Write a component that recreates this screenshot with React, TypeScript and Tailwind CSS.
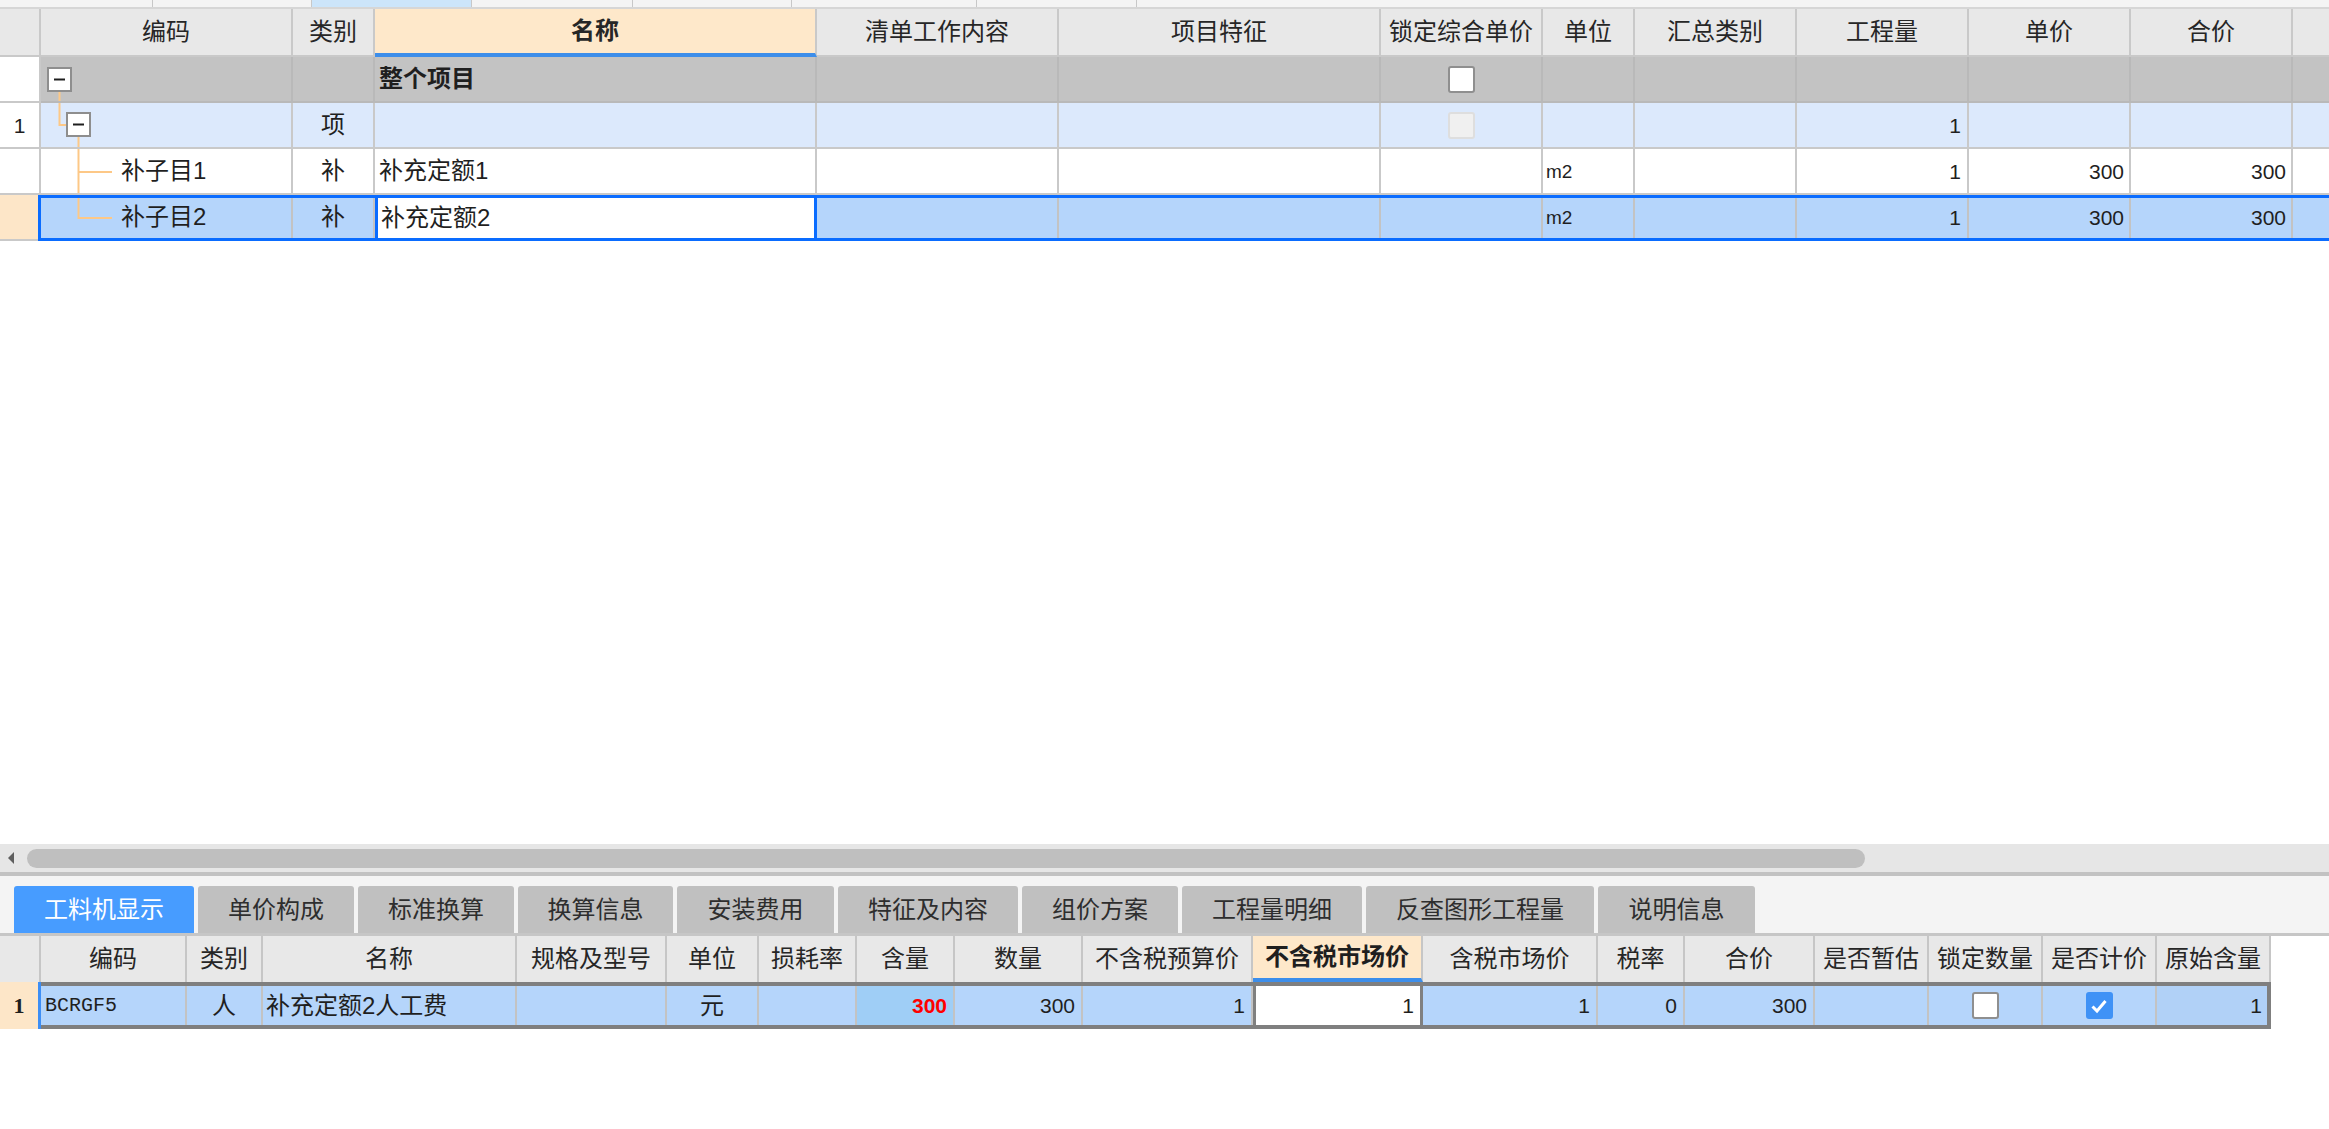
import React from "react";

const ORANGE = "#fdc887";

function TreeCell({ row }: { row: number }) {
  // 252 x 46 drawing of tree connectors / expanders
  return (
    <svg className="absolute inset-0" width="250" height="44" viewBox="0 0 250 44">
      {row === 0 && (
        <>
          <line x1="18.5" y1="34" x2="18.5" y2="46" stroke={ORANGE} strokeWidth="2" />
          <rect x="7" y="11" width="23" height="23" fill="#fff" stroke="#8e8e8e" strokeWidth="2" />
          <line x1="13" y1="22.5" x2="24" y2="22.5" stroke="#1e1e1e" strokeWidth="2" />
        </>
      )}
      {row === 1 && (
        <>
          <line x1="18.5" y1="0" x2="18.5" y2="23" stroke={ORANGE} strokeWidth="2" />
          <line x1="18.5" y1="22" x2="26" y2="22" stroke={ORANGE} strokeWidth="2" />
          <line x1="37.5" y1="33" x2="37.5" y2="46" stroke={ORANGE} strokeWidth="2" />
          <rect x="26" y="10" width="23" height="23" fill="#fff" stroke="#8e8e8e" strokeWidth="2" />
          <line x1="32" y1="21.5" x2="43" y2="21.5" stroke="#1e1e1e" strokeWidth="2" />
        </>
      )}
      {row === 2 && (
        <>
          <line x1="37.5" y1="0" x2="37.5" y2="46" stroke={ORANGE} strokeWidth="2" />
          <line x1="37.5" y1="23" x2="71" y2="23" stroke={ORANGE} strokeWidth="2" />
        </>
      )}
      {row === 3 && (
        <>
          <line x1="37.5" y1="0" x2="37.5" y2="24" stroke={ORANGE} strokeWidth="2" />
          <line x1="37.5" y1="23" x2="71" y2="23" stroke={ORANGE} strokeWidth="2" />
        </>
      )}
    </svg>
  );
}

function Check({ checked = false }: { checked?: boolean }) {
  if (checked) {
    return (
      <div className="w-[27px] h-[27px] rounded-[3px] bg-[#3f92f6] flex items-center justify-center">
        <svg width="18" height="16" viewBox="0 0 18 16">
          <path d="M2.5 8.5 L7 13 L15.5 3" fill="none" stroke="#fff" strokeWidth="3" />
        </svg>
      </div>
    );
  }
  return <div className="w-[27px] h-[27px] rounded-[3px] bg-white border-2 border-[#8f8f8f]" />;
}

const topHead: { w: string; t: string }[] = [
  { w: "w-[41px]", t: "" },
  { w: "w-[252px]", t: "编码" },
  { w: "w-[82px]", t: "类别" },
  { w: "w-[442px]", t: "名称" },
  { w: "w-[242px]", t: "清单工作内容" },
  { w: "w-[322px]", t: "项目特征" },
  { w: "w-[162px]", t: "锁定综合单价" },
  { w: "w-[92px]", t: "单位" },
  { w: "w-[162px]", t: "汇总类别" },
  { w: "w-[172px]", t: "工程量" },
  { w: "w-[162px]", t: "单价" },
  { w: "w-[162px]", t: "合价" },
];

const botHead: { w: string; t: string }[] = [
  { w: "w-[41px]", t: "" },
  { w: "w-[146px]", t: "编码" },
  { w: "w-[76px]", t: "类别" },
  { w: "w-[254px]", t: "名称" },
  { w: "w-[150px]", t: "规格及型号" },
  { w: "w-[92px]", t: "单位" },
  { w: "w-[98px]", t: "损耗率" },
  { w: "w-[98px]", t: "含量" },
  { w: "w-[128px]", t: "数量" },
  { w: "w-[170px]", t: "不含税预算价" },
  { w: "w-[170px]", t: "不含税市场价" },
  { w: "w-[175px]", t: "含税市场价" },
  { w: "w-[87px]", t: "税率" },
  { w: "w-[130px]", t: "合价" },
  { w: "w-[114px]", t: "是否暂估" },
  { w: "w-[114px]", t: "锁定数量" },
  { w: "w-[114px]", t: "是否计价" },
  { w: "w-[114px]", t: "原始含量" },
];

const tabs: { t: string; w: string }[] = [
  { t: "工料机显示", w: "w-[180px]" },
  { t: "单价构成", w: "w-[156px]" },
  { t: "标准换算", w: "w-[156px]" },
  { t: "换算信息", w: "w-[155px]" },
  { t: "安装费用", w: "w-[157px]" },
  { t: "特征及内容", w: "w-[180px]" },
  { t: "组价方案", w: "w-[156px]" },
  { t: "工程量明细", w: "w-[180px]" },
  { t: "反查图形工程量", w: "w-[228px]" },
  { t: "说明信息", w: "w-[157px]" },
];

const cellBase = "shrink-0 h-full flex items-center border-r-2 border-b-2";
const num = "text-[21px] font-['Liberation_Sans',sans-serif]";

export default function App() {
  return (
    <div className="w-[2329px] h-[1129px] overflow-hidden bg-white text-[#1f1f1f] text-[24px] leading-none font-['Liberation_Sans','Noto_Sans_CJK_SC',sans-serif]">
      {/* TOP GRID */}
      <div className="h-[844px] flex flex-col">
        {/* top strip */}
        <div className="flex h-[9px] shrink-0 border-b-2 border-[#d6d6d6] bg-[#f4f4f4]">
          <div className="w-[153px] border-r border-[#c8c8c8]" />
          <div className="w-[159px] border-r border-[#c8c8c8]" />
          <div className="w-[160px] border-r border-[#c8c8c8] bg-[#cce5fa]" />
          <div className="w-[161px] border-r border-[#c8c8c8]" />
          <div className="w-[159px] border-r border-[#c8c8c8]" />
          <div className="w-[185px] border-r border-[#c8c8c8]" />
          <div className="w-[160px] border-r border-[#c8c8c8]" />
          <div className="flex-1" />
        </div>

        {/* header */}
        <div className="flex h-[48px] shrink-0 bg-[#e8e8e8] text-[#262626]">
          {topHead.map((h, i) =>
            h.t === "名称" ? (
              <div
                key={i}
                className={`${h.w} shrink-0 h-full flex items-center justify-center border-r-2 border-b-[4px] border-[#c9c9c9] border-b-[#3d8eea] bg-[#fee8ca] font-bold`}
              >
                {h.t}
              </div>
            ) : (
              <div key={i} className={`${h.w} ${cellBase} justify-center border-[#c9c9c9]`}>
                {h.t}
              </div>
            )
          )}
          <div className="flex-1 h-full border-b-2 border-[#c9c9c9]" />
        </div>

        {/* row 0 : 整个项目 */}
        <div className="flex h-[46px] shrink-0">
          <div className={`w-[41px] ${cellBase} bg-white border-[#c9c9c9]`} />
          <div className={`w-[252px] ${cellBase} relative bg-[#c3c3c3] border-[#b9b9b9]`}>
            <TreeCell row={0} />
          </div>
          <div className={`w-[82px] ${cellBase} bg-[#c3c3c3] border-[#b9b9b9]`} />
          <div className={`w-[442px] ${cellBase} bg-[#c3c3c3] border-[#b9b9b9] pl-[4px] font-bold`}>整个项目</div>
          <div className={`w-[242px] ${cellBase} bg-[#c3c3c3] border-[#b9b9b9]`} />
          <div className={`w-[322px] ${cellBase} bg-[#c3c3c3] border-[#b9b9b9]`} />
          <div className={`w-[162px] ${cellBase} justify-center bg-[#c3c3c3] border-[#b9b9b9]`}>
            <Check />
          </div>
          <div className={`w-[92px] ${cellBase} bg-[#c3c3c3] border-[#b9b9b9]`} />
          <div className={`w-[162px] ${cellBase} bg-[#c3c3c3] border-[#b9b9b9]`} />
          <div className={`w-[172px] ${cellBase} bg-[#c3c3c3] border-[#b9b9b9]`} />
          <div className={`w-[162px] ${cellBase} bg-[#c3c3c3] border-[#b9b9b9]`} />
          <div className={`w-[162px] ${cellBase} bg-[#c3c3c3] border-[#b9b9b9]`} />
          <div className="flex-1 h-full border-b-2 bg-[#c3c3c3] border-[#b9b9b9]" />
        </div>

        {/* row 1 */}
        <div className="flex h-[46px] shrink-0">
          <div className={`w-[41px] ${cellBase} justify-center bg-white border-[#c9c9c9] ${num}`}>1</div>
          <div className={`w-[252px] ${cellBase} relative bg-[#dce9fc] border-[#c9c9c9]`}>
            <TreeCell row={1} />
          </div>
          <div className={`w-[82px] ${cellBase} justify-center bg-[#dce9fc] border-[#c9c9c9]`}>项</div>
          <div className={`w-[442px] ${cellBase} bg-[#dce9fc] border-[#c9c9c9]`} />
          <div className={`w-[242px] ${cellBase} bg-[#dce9fc] border-[#c9c9c9]`} />
          <div className={`w-[322px] ${cellBase} bg-[#dce9fc] border-[#c9c9c9]`} />
          <div className={`w-[162px] ${cellBase} justify-center bg-[#dce9fc] border-[#c9c9c9]`}>
            <div className="w-[27px] h-[27px] rounded-[3px] bg-[#f0f0f0] border-2 border-[#dedede]" />
          </div>
          <div className={`w-[92px] ${cellBase} bg-[#dce9fc] border-[#c9c9c9]`} />
          <div className={`w-[162px] ${cellBase} bg-[#dce9fc] border-[#c9c9c9]`} />
          <div className={`w-[172px] ${cellBase} justify-end pr-[6px] bg-[#dce9fc] border-[#c9c9c9] ${num}`}>1</div>
          <div className={`w-[162px] ${cellBase} bg-[#dce9fc] border-[#c9c9c9]`} />
          <div className={`w-[162px] ${cellBase} bg-[#dce9fc] border-[#c9c9c9]`} />
          <div className="flex-1 h-full border-b-2 bg-[#dce9fc] border-[#c9c9c9]" />
        </div>

        {/* row 2 : 补子目1 */}
        <div className="flex h-[46px] shrink-0">
          <div className={`w-[41px] ${cellBase} bg-white border-[#c9c9c9]`} />
          <div className={`w-[252px] ${cellBase} relative bg-white border-[#c9c9c9] pl-[80px]`}>
            <TreeCell row={2} />
            <span className="relative">补子目1</span>
          </div>
          <div className={`w-[82px] ${cellBase} justify-center bg-white border-[#c9c9c9]`}>补</div>
          <div className={`w-[442px] ${cellBase} bg-white border-[#c9c9c9] pl-[4px]`}>补充定额1</div>
          <div className={`w-[242px] ${cellBase} bg-white border-[#c9c9c9]`} />
          <div className={`w-[322px] ${cellBase} bg-white border-[#c9c9c9]`} />
          <div className={`w-[162px] ${cellBase} bg-white border-[#c9c9c9]`} />
          <div className={`w-[92px] ${cellBase} bg-white border-[#c9c9c9] pl-[3px] text-[19px] font-['Liberation_Sans',sans-serif]`}>m2</div>
          <div className={`w-[162px] ${cellBase} bg-white border-[#c9c9c9]`} />
          <div className={`w-[172px] ${cellBase} justify-end pr-[6px] bg-white border-[#c9c9c9] ${num}`}>1</div>
          <div className={`w-[162px] ${cellBase} justify-end pr-[5px] bg-white border-[#c9c9c9] ${num}`}>300</div>
          <div className={`w-[162px] ${cellBase} justify-end pr-[5px] bg-white border-[#c9c9c9] ${num}`}>300</div>
          <div className="flex-1 h-full border-b-2 bg-white border-[#c9c9c9]" />
        </div>

        {/* row 3 : 补子目2 (selected) */}
        <div className="relative flex h-[46px] shrink-0">
          <div className={`w-[41px] ${cellBase} bg-[#fde6c8] border-[#c9c9c9]`} />
          <div className={`w-[252px] ${cellBase} relative bg-[#b5d5fb] border-[#c3c3c3] pl-[80px]`}>
            <TreeCell row={3} />
            <span className="relative">补子目2</span>
          </div>
          <div className={`w-[82px] ${cellBase} justify-center bg-[#b5d5fb] border-[#c3c3c3]`}>补</div>
          <div className="w-[442px] shrink-0 h-full flex items-center bg-white border-x-[3px] border-[#0a6cff] pl-[3px]">补充定额2</div>
          <div className={`w-[242px] ${cellBase} bg-[#b5d5fb] border-[#c3c3c3]`} />
          <div className={`w-[322px] ${cellBase} bg-[#b5d5fb] border-[#c3c3c3]`} />
          <div className={`w-[162px] ${cellBase} bg-[#b5d5fb] border-[#c3c3c3]`} />
          <div className={`w-[92px] ${cellBase} bg-[#b5d5fb] border-[#c3c3c3] pl-[3px] text-[19px] font-['Liberation_Sans',sans-serif]`}>m2</div>
          <div className={`w-[162px] ${cellBase} bg-[#b5d5fb] border-[#c3c3c3]`} />
          <div className={`w-[172px] ${cellBase} justify-end pr-[6px] bg-[#b5d5fb] border-[#c3c3c3] ${num}`}>1</div>
          <div className={`w-[162px] ${cellBase} justify-end pr-[5px] bg-[#b5d5fb] border-[#c3c3c3] ${num}`}>300</div>
          <div className={`w-[162px] ${cellBase} justify-end pr-[5px] bg-[#b5d5fb] border-[#c3c3c3] ${num}`}>300</div>
          <div className="flex-1 h-full border-b-2 bg-[#b5d5fb] border-[#c3c3c3]" />
          <div className="pointer-events-none absolute top-0 bottom-0 left-[38px] right-0 border-y-[3px] border-l-[3px] border-[#0a6cff]" />
        </div>

        <div className="flex-1 bg-white" />
      </div>

      {/* horizontal scrollbar */}
      <div className="h-[32px] bg-[#e6e6e6] border-b-4 border-[#c2c2c2] flex items-center">
        <svg className="ml-[7px] shrink-0" width="8" height="12" viewBox="0 0 8 12">
          <path d="M7 0 L1 6 L7 12 Z" fill="#5f5f5f" />
        </svg>
        <div className="ml-[12px] w-[1838px] h-[19px] rounded-full bg-[#bfbfbf]" />
      </div>

      {/* tabs */}
      <div className="h-[60px] bg-[#f4f4f4] border-b-[3px] border-[#c6c6c6] flex items-end gap-[4px] pl-[14px]">
        {tabs.map((t, i) => (
          <div
            key={i}
            className={
              i === 0
                ? `${t.w} h-[47px] shrink-0 rounded-t-[3px] bg-[#479cff] text-white flex items-center justify-center`
                : `${t.w} h-[47px] shrink-0 rounded-t-[3px] bg-[#c0c0c0] text-[#2e2e2e] flex items-center justify-center`
            }
          >
            {t.t}
          </div>
        ))}
      </div>

      {/* bottom header */}
      <div className="flex h-[46px]">
        {botHead.map((h, i) =>
          h.t === "不含税市场价" ? (
            <div
              key={i}
              className={`${h.w} shrink-0 h-full flex items-center justify-center border-r-2 border-b-[4px] border-[#c6c6c6] border-b-[#3d8eea] bg-[#fee8ca] font-bold`}
            >
              {h.t}
            </div>
          ) : (
            <div key={i} className={`${h.w} shrink-0 h-full flex items-center justify-center border-r-2 border-[#c6c6c6] bg-[#e8e8e8] text-[#262626]`}>
              {h.t}
            </div>
          )
        )}
      </div>

      {/* bottom data row */}
      <div className="flex h-[47px]">
        <div className="w-[38px] shrink-0 h-full bg-[#fde6c8] flex items-center justify-center font-bold text-[22px] font-['Liberation_Serif',serif]">1</div>
        <div className="w-[3px] shrink-0 h-full bg-[#3d8ef5]" />
        <div className="flex h-full border-y-4 border-r-4 border-[#7f7f7f] bg-[#b5d5fb]">
          <div className="w-[146px] shrink-0 h-full flex items-center border-r-2 border-[#c3c3c3] pl-[4px] text-[20px] font-['Liberation_Mono',monospace]">BCRGF5</div>
          <div className="w-[76px] shrink-0 h-full flex items-center justify-center border-r-2 border-[#c3c3c3]">人</div>
          <div className="w-[254px] shrink-0 h-full flex items-center border-r-2 border-[#c3c3c3] pl-[3px]">补充定额2人工费</div>
          <div className="w-[150px] shrink-0 h-full border-r-2 border-[#c3c3c3]" />
          <div className="w-[92px] shrink-0 h-full flex items-center justify-center border-r-2 border-[#c3c3c3]">元</div>
          <div className="w-[98px] shrink-0 h-full border-r-2 border-[#c3c3c3]" />
          <div className="w-[98px] shrink-0 h-full flex items-center justify-end pr-[6px] border-r-2 border-[#c3c3c3] bg-[#9fcef6] text-[#ff0000] font-bold text-[21px] font-['Liberation_Sans',sans-serif]">300</div>
          <div className={`w-[128px] shrink-0 h-full flex items-center justify-end pr-[6px] border-r-2 border-[#c3c3c3] ${num}`}>300</div>
          <div className={`w-[170px] shrink-0 h-full flex items-center justify-end pr-[6px] border-r-2 border-[#c3c3c3] ${num}`}>1</div>
          <div className={`w-[170px] shrink-0 h-full flex items-center justify-end pr-[6px] border-x-[3px] border-[#808080] bg-white ${num}`}>1</div>
          <div className={`w-[175px] shrink-0 h-full flex items-center justify-end pr-[6px] border-r-2 border-[#c3c3c3] ${num}`}>1</div>
          <div className={`w-[87px] shrink-0 h-full flex items-center justify-end pr-[6px] border-r-2 border-[#c3c3c3] ${num}`}>0</div>
          <div className={`w-[130px] shrink-0 h-full flex items-center justify-end pr-[6px] border-r-2 border-[#c3c3c3] ${num}`}>300</div>
          <div className="w-[114px] shrink-0 h-full border-r-2 border-[#c3c3c3]" />
          <div className="w-[114px] shrink-0 h-full flex items-center justify-center border-r-2 border-[#c3c3c3]">
            <Check />
          </div>
          <div className="w-[114px] shrink-0 h-full flex items-center justify-center border-r-2 border-[#c3c3c3]">
            <Check checked />
          </div>
          <div className={`w-[110px] shrink-0 h-full flex items-center justify-end pr-[5px] bg-[#b1d1f7] ${num}`}>1</div>
        </div>
      </div>
    </div>
  );
}
